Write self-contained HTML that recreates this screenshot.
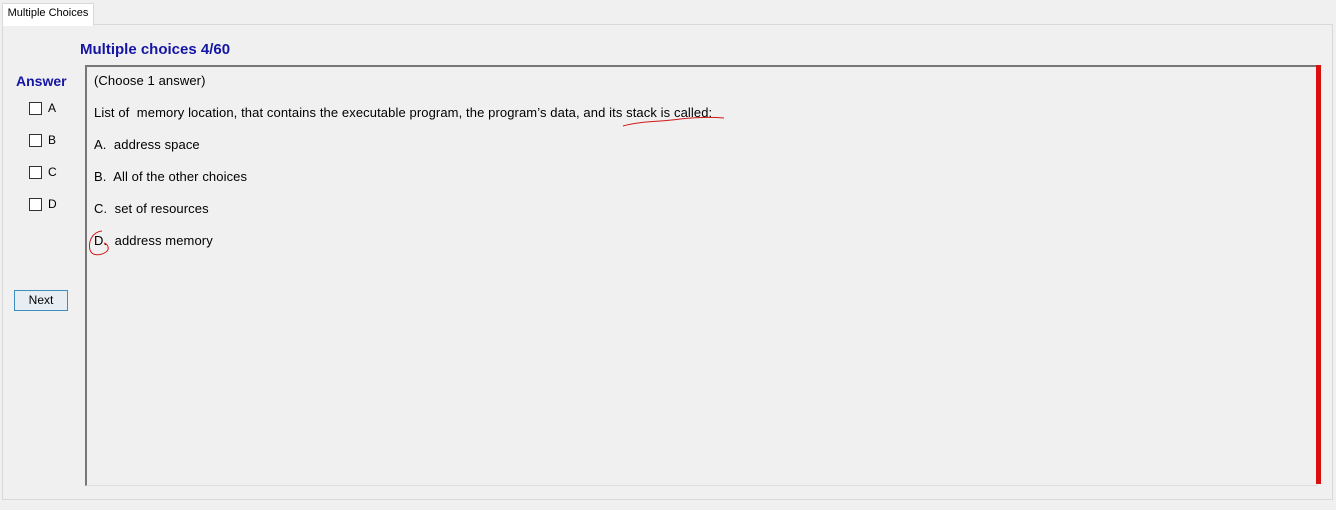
<!DOCTYPE html>
<html><head><meta charset="utf-8"><style>
body{margin:0;width:1336px;height:510px;background:#f0f0f0;font-family:"Liberation Sans",sans-serif;position:relative;overflow:hidden;font-size:13px;color:#000}
.a{position:absolute}
.tab{left:2px;top:3px;width:90px;height:22px;background:#fff;border:1px solid #d9d9d9;border-bottom:none;font-size:11px;line-height:19px;text-align:center;z-index:2}
.page{left:2px;top:24px;width:1329px;height:474px;border:1px solid #d9d9d9;background:#f0f0f0}
.title{left:80px;top:41px;font-weight:bold;color:#1515a5;font-size:15px}
.ans{left:16px;top:73px;font-weight:bold;color:#1515a5;font-size:14px}
.cb{width:11px;height:11px;border:1px solid #333;background:#fff}
.lbl{font-size:12px}
.box{left:85px;top:65px;width:1231px;height:418px;border-top:2px solid #777;border-left:2px solid #777;border-bottom:1px solid #ddd}
.red{left:1316px;top:65px;width:5px;height:419px;background:#d81010}
.t{left:94px;font-size:13px;letter-spacing:0.1px}
.btn{left:14px;top:290px;width:52px;height:19px;border:1px solid #3c8ec0;background:#e6eef4;font-size:12px;text-align:center;line-height:19px}
</style></head><body>
<div class="a page"></div>
<div class="a tab">Multiple Choices</div>
<div class="a title">Multiple choices 4/60</div>
<div class="a ans">Answer</div>
<div class="a cb" style="left:29px;top:102px"></div><div class="a lbl" style="left:48px;top:101px">A</div>
<div class="a cb" style="left:29px;top:134px"></div><div class="a lbl" style="left:48px;top:133px">B</div>
<div class="a cb" style="left:29px;top:166px"></div><div class="a lbl" style="left:48px;top:165px">C</div>
<div class="a cb" style="left:29px;top:198px"></div><div class="a lbl" style="left:48px;top:197px">D</div>
<div class="a btn">Next</div>
<div class="a box"></div>
<div class="a red"></div>
<div class="a t" style="top:73px">(Choose 1 answer)</div>
<div class="a t" style="top:105px">List of&nbsp; memory location, that contains the executable program, the program’s data, and its stack is called:</div>
<div class="a t" style="top:137px">A.&nbsp; address space</div>
<div class="a t" style="top:169px">B.&nbsp; All of the other choices</div>
<div class="a t" style="top:201px">C.&nbsp; set of resources</div>
<div class="a t" style="top:233px">D.&nbsp; address memory</div>
<svg class="a" style="left:0;top:0" width="1336" height="510">
<path d="M623 126 C640 121 660 122 680 119 C700 117 712 117 724 118" stroke="#d01818" stroke-width="1" fill="none"/>
<path d="M102 231 C92 232 88 242 90 250 C92 256 100 256 106 252 C110 249 108 244 104 243" stroke="#d01818" stroke-width="1" fill="none"/>
</svg>
</body></html>
